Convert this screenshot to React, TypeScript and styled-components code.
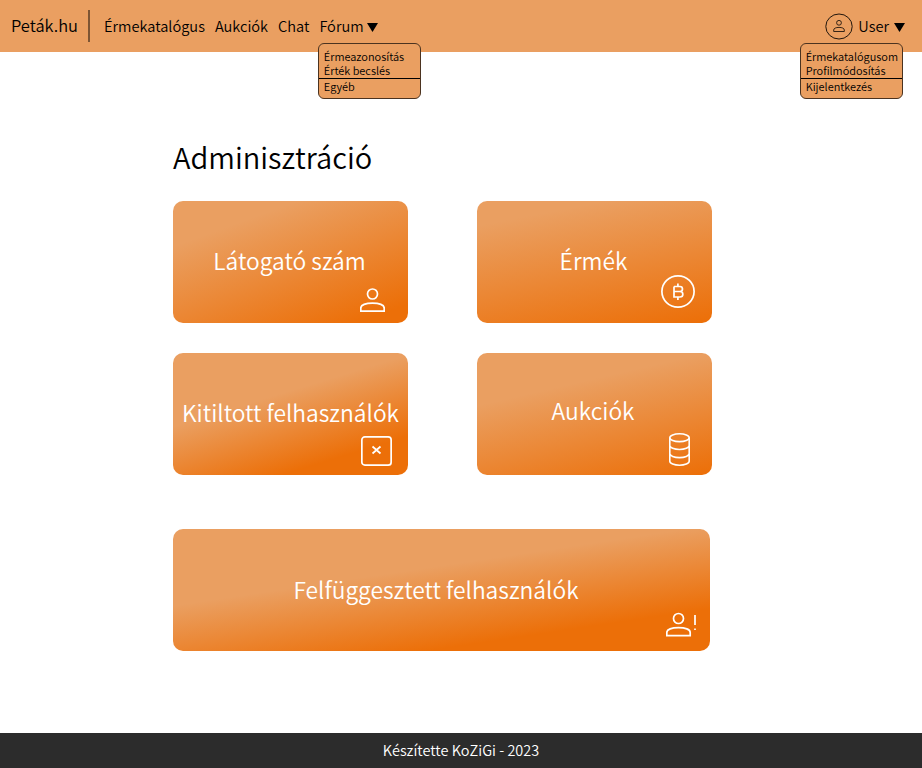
import React from "react";
import styled, { createGlobalStyle } from "styled-components";

const GlobalStyle = createGlobalStyle`
  * { box-sizing: border-box; }
  body {
    margin: 0;
    background: #fff;
    font-family: "Noto Sans CJK SC", "Noto Sans", sans-serif;
    font-weight: 350;
    color: #000;
  }
`;

const Page = styled.div`
  display: flex;
  flex-direction: column;
  width: 922px;
  height: 768px;
  overflow: hidden;
`;

const Header = styled.header`
  display: flex;
  align-items: center;
  flex: none;
  height: 52px;
  padding: 0 17px 0 11px;
  background: #ea9f61;
`;

const Brand = styled.a`
  width: 77px;
  padding-bottom: 2px;
  font-size: 16.45px;
  line-height: 24px;
  white-space: nowrap;
`;

const Divider = styled.span`
  width: 2px;
  height: 32px;
  margin-right: 14px;
  background: #7d5534;
`;

const Nav = styled.nav`
  display: flex;
  gap: 10px;
`;

const NavItem = styled.div`
  position: relative;
  display: flex;
  align-items: center;
  font-size: 14.6px;
  line-height: 22px;
  white-space: nowrap;
`;

const Account = styled(NavItem)`
  margin-left: auto;
`;

const AvatarIcon = styled.svg`
  margin: 0 5px 0 0;
`;

const Caret = styled.svg<{ $gap: number }>`
  margin: 2px 0 0 ${(p) => p.$gap}px;
`;

const Menu = styled.div<{ $right: number; $top: number }>`
  position: absolute;
  right: ${(p) => p.$right}px;
  top: ${(p) => p.$top}px;
  width: 103px;
  height: 56px;
  padding-top: 5px;
  border: 1.5px solid #4b3320;
  border-radius: 6px;
  background: #ea9f61;
  font-size: 10.95px;
  line-height: 14px;
`;

const MenuItem = styled.div<{ $separated?: boolean }>`
  height: ${(p) => (p.$separated ? 17 : 14)}px;
  margin-top: ${(p) => (p.$separated ? 1 : 0)}px;
  padding-left: 5.2px;
  border-top: ${(p) => (p.$separated ? "1px solid #000" : "none")};
`;

const Main = styled.main`
  flex: 1;
  padding: 82px 0 0 173px;
`;

const Title = styled.h1`
  margin: 0 0 23px;
  font-size: 29px;
  font-weight: inherit;
  line-height: 44px;
`;

const CardGrid = styled.div`
  display: grid;
  grid-template-columns: 235px 235px;
  gap: 30px 69px;
  margin-bottom: 54px;
`;

const Card = styled.section<{ $angle: number; $from: number; $to: number; $wide?: boolean }>`
  position: relative;
  display: flex;
  align-items: center;
  justify-content: center;
  width: ${(p) => (p.$wide ? 537 : 235)}px;
  height: 122px;
  border-radius: 10px;
  color: #fff;
  background: linear-gradient(${(p) => p.$angle}deg, #ea9f61 ${(p) => p.$from}%, #ec6f08 ${(p) => p.$to}%);
`;

const CardLabel = styled.span<{ $right?: number; $bottom?: number }>`
  padding: 0 ${(p) => p.$right || 0}px ${(p) => p.$bottom ?? 3}px 0;
  font-size: 22.8px;
  line-height: 34px;
  white-space: nowrap;
`;

const CardIcon = styled.svg<{ $x: number; $y: number }>`
  position: absolute;
  left: ${(p) => p.$x}px;
  top: ${(p) => p.$y}px;
  fill: none;
  stroke: #fff;
`;

const Footer = styled.footer`
  flex: none;
  height: 35px;
  background: #2c2c2c;
  color: #fff;
  font-size: 14.5px;
  line-height: 34px;
  text-align: center;
`;

const Person = () => (
  <>
    <circle cx="12.5" cy="6" r="5" strokeWidth="1.7" />
    <path d="M.8 23.2V20c0-3.2 5-4.8 11.7-4.8S24.200 16.800 24.200 20v3.200Z" strokeWidth="1.7" />
  </>
);

const DownCaret = ({ gap }: { gap: number }) => (
  <Caret $gap={gap} width="11" height="9" viewBox="0 0 11 9">
    <path d="M0 0h11L5.500 9Z" />
  </Caret>
);

export default function App() {
  return (
    <Page>
      <GlobalStyle />
      <Header>
        <Brand>Peták.hu</Brand>
        <Divider />
        <Nav>
          <NavItem>Érmekatalógus</NavItem>
          <NavItem>Aukciók</NavItem>
          <NavItem>Chat</NavItem>
          <NavItem>
            Fórum
            <DownCaret gap={3} />
            <Menu $right={-43} $top={28}>
              <MenuItem>Érmeazonosítás</MenuItem>
              <MenuItem>Érték becslés</MenuItem>
              <MenuItem $separated>Egyéb</MenuItem>
            </Menu>
          </NavItem>
        </Nav>
        <Account>
          <AvatarIcon width="28" height="27" viewBox="0 0 28 27" fill="none" stroke="#21160d">
            <ellipse cx="14" cy="13.500" rx="13.200" ry="12.500" />
            <circle cx="14" cy="9.800" r="2.400" strokeWidth=".9" />
            <path d="M8.700 18.500V17c0-1.700 2.200-2.600 5.300-2.600s5.300.9 5.300 2.600v1.500Z" strokeWidth=".9" />
          </AvatarIcon>
          User
          <DownCaret gap={5} />
          <Menu $right={2.5} $top={30.5}>
            <MenuItem>Érmekatalógusom</MenuItem>
            <MenuItem>Profilmódosítás</MenuItem>
            <MenuItem $separated>Kijelentkezés</MenuItem>
          </Menu>
        </Account>
      </Header>
      <Main>
        <Title>Adminisztráció</Title>
        <CardGrid>
          <Card $angle={160} $from={22} $to={91}>
            <CardLabel $right={2}>Látogató szám</CardLabel>
            <CardIcon $x={187} $y={87} width="25" height="24">
              <Person />
            </CardIcon>
          </Card>
          <Card $angle={169} $from={15} $to={99}>
            <CardLabel $right={2}>Érmék</CardLabel>
            <CardIcon $x={184} $y={74} width="34" height="33" strokeWidth="1.7">
              <ellipse cx="17" cy="16.500" rx="16.100" ry="15.600" />
              <path d="M13 11.500h6c3.300 0 3.300 5 0 5h-6m6 0c3.800 0 3.800 5.500 0 5.500h-6V11.500M16.900 8.500v3m0 10.500v3" />
            </CardIcon>
          </Card>
          <Card $angle={163} $from={38} $to={80}>
            <CardLabel>Kitiltott felhasználók</CardLabel>
            <CardIcon $x={188} $y={83} width="31" height="30" strokeWidth="1.700">
              <rect x=".85" y=".85" width="29.300" height="28.300" rx="3" />
              <path d="m11.500 10.500 8 7m0-7-8 7" />
            </CardIcon>
          </Card>
          <Card $angle={167} $from={30} $to={99}>
            <CardLabel $right={3} $bottom={6}>Aukciók</CardLabel>
            <CardIcon $x={192} $y={80} width="21" height="33" strokeWidth="1.600">
              <ellipse cx="10.500" cy="4.700" rx="9.700" ry="3.900" />
              <path d="M.8 4.700v23.500c0 2.200 4.400 4 9.700 4s9.700-1.800 9.700-4V4.700M.8 12.500c0 2.200 4.400 4 9.700 4s9.700-1.800 9.700-4M.8 20.600c0 2.200 4.400 4 9.700 4s9.700-1.800 9.700-4" />
            </CardIcon>
          </Card>
        </CardGrid>
        <Card $wide $angle={171.500} $from={38} $to={79}>
          <CardLabel $right={11} $bottom={1}>Felfüggesztett felhasználók</CardLabel>
          <CardIcon $x={493} $y={83} width="31" height="25">
            <g transform="translate(0 .5)">
              <Person />
            </g>
            <path d="M29 3v10M29 16.500v1.500" strokeWidth="1.700" />
          </CardIcon>
        </Card>
      </Main>
      <Footer>Készítette KoZiGi - 2023</Footer>
    </Page>
  );
}
